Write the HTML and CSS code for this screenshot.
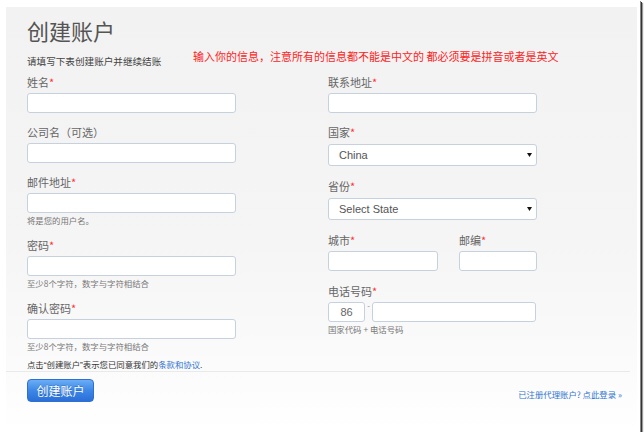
FILE: index.html
```html
<!DOCTYPE html>
<html lang="zh-CN">
<head>
<meta charset="utf-8">
<title>创建账户</title>
<link rel="stylesheet" href="styles.css">
</head>
<body>
<div class="frame">
  <div class="panel">
    <h1 class="title">创建账户</h1>
    <div class="intro">
      <p class="subtitle">请填写下表创建账户并继续结账</p>
      <p class="note">输入你的信息，注意所有的信息都不能是中文的 都必须要是拼音或者是英文</p>
    </div>
    <div class="cols">
      <div class="col">
        <div class="field">
          <label class="label">姓名<span class="req">*</span></label>
          <div class="input"></div>
        </div>
        <div class="field">
          <label class="label">公司名（可选）</label>
          <div class="input"></div>
        </div>
        <div class="field">
          <label class="label">邮件地址<span class="req">*</span></label>
          <div class="input"></div>
          <div class="help">将是您的用户名。</div>
        </div>
        <div class="field">
          <label class="label">密码<span class="req">*</span></label>
          <div class="input"></div>
          <div class="help">至少8个字符，数字与字符相结合</div>
        </div>
        <div class="field">
          <label class="label">确认密码<span class="req">*</span></label>
          <div class="input"></div>
          <div class="help">至少8个字符，数字与字符相结合</div>
        </div>
      </div>
      <div class="col col-right">
        <div class="field">
          <label class="label">联系地址<span class="req">*</span></label>
          <div class="input"></div>
        </div>
        <div class="field select-field">
          <label class="label">国家<span class="req">*</span></label>
          <div class="input select"><span>China</span><svg class="caret" width="5" height="4" viewBox="0 0 5 4"><polygon points="0,0 5,0 2.5,4" fill="#111"/></svg></div>
        </div>
        <div class="field select-field">
          <label class="label">省份<span class="req">*</span></label>
          <div class="input select"><span>Select State</span><svg class="caret" width="5" height="4" viewBox="0 0 5 4"><polygon points="0,0 5,0 2.5,4" fill="#111"/></svg></div>
        </div>
        <div class="field row">
          <div class="city">
            <label class="label">城市<span class="req">*</span></label>
            <div class="input"></div>
          </div>
          <div class="zip">
            <label class="label">邮编<span class="req">*</span></label>
            <div class="input"></div>
          </div>
        </div>
        <div class="field">
          <label class="label">电话号码<span class="req">*</span></label>
          <div class="phone">
            <div class="input cc">86</div>
            <span class="dash">-</span>
            <div class="input tel"></div>
          </div>
          <div class="help">国家代码 + 电话号码</div>
        </div>
      </div>
    </div>
    <p class="terms">点击“创建账户”表示您已同意我们的<a class="link" href="#">条款和协议</a>.</p>
    <div class="footer">
      <button class="btn" type="button">创建账户</button>
      <a class="login" href="#">已注册代理账户? 点此登录 »</a>
    </div>
  </div>
</div>
</body>
</html>
```
FILE: styles.css
```css
* { box-sizing: border-box; }
html, body { margin: 0; padding: 0; background: #fff; }
body { font-family: "Noto Sans CJK SC", "Liberation Sans", sans-serif; }

.frame {
  width: 640px;
  height: 432px;
  background: #fff;
  padding: 7px 3px 0 6px;
  box-shadow: 1px 1px 0 #888, 2px 2px 0 #333, 3px 3px 1px #999;
}
.panel {
  height: 425px;
  background: linear-gradient(#f2f2f2 0, #f5f5f5 55%, #fbfbfb 85%, #fff 100%);
  padding: 10px 0 0 21px;
}
.title {
  margin: 0;
  font-size: 22px;
  line-height: 26px;
  font-weight: normal;
  color: #555;
}
.intro {
  display: flex;
  align-items: flex-start;
  margin-top: 7px;
  height: 17px;
}
.subtitle {
  width: 166px;
  flex: none;
  margin: 5px 0 0;
  font-size: 9.6px;
  line-height: 12px;
  color: #444;
}
.note {
  margin: 0;
  font-size: 11px;
  line-height: 12px;
  color: #f22;
  white-space: nowrap;
}
.cols {
  display: grid;
  grid-template-columns: 209px 209px;
  column-gap: 92px;
  margin-top: 8px;
  align-items: start;
}
.field { margin-bottom: 12px; }
.field:last-child { margin-bottom: 0; }
.col-right .field { margin-bottom: 13px; }
.col-right .field:first-child { margin-bottom: 12px; }
.col-right .field:last-child { margin-bottom: 0; }
.label {
  display: block;
  font-size: 11px;
  line-height: 14px;
  color: #666;
  margin-bottom: 4px;
}
.req { color: #f33; }
.input {
  height: 20px;
  background: #fff;
  border: 1px solid #c6d1de;
  border-radius: 3px;
}
.help {
  margin-top: 2px;
  font-size: 8.4px;
  line-height: 11px;
  color: #777;
}
.select-field .label { margin-bottom: 5px; }
.select {
  height: 22px;
  display: flex;
  align-items: center;
  justify-content: space-between;
  padding: 0 4px 0 10px;
  font-family: "Liberation Sans", Arial, sans-serif;
  font-size: 11px;
  color: #555;
}
.row { display: flex; gap: 21px; }
.city { width: 110px; }
.zip { width: 78px; }
.phone { display: flex; align-items: flex-start; }
.cc {
  width: 37px;
  text-align: center;
  font-family: "Liberation Sans", Arial, sans-serif;
  font-size: 11px;
  line-height: 18px;
  color: #666;
}
.dash {
  width: 7px;
  text-align: center;
  font-family: "Liberation Sans", Arial, sans-serif;
  font-size: 8px;
  line-height: 8px;
  color: #888;
}
.tel { width: 164px; }
.terms {
  margin: 7px 0 0;
  font-family: "Liberation Sans", "Noto Sans CJK SC", sans-serif;
  font-size: 8.4px;
  line-height: 12px;
  color: #333;
}
.link { color: #2f74d0; text-decoration: none; }
.footer {
  display: flex;
  justify-content: space-between;
  align-items: flex-end;
  margin: 0 7px 0 -21px;
  padding: 7px 8px 0 21px;
  border-top: 1px solid #e9e9e9;
}
.btn {
  width: 67px;
  height: 23px;
  padding: 0;
  border: 1px solid #2e6fcf;
  border-radius: 4px;
  background: linear-gradient(#6aaef6, #3d87e6 50%, #2a6fd8);
  color: #fff;
  font-family: "Noto Sans CJK SC", sans-serif;
  font-size: 12px;
  line-height: 21px;
  text-shadow: 0 -1px 0 rgba(0, 0, 0, 0.2);
}
.login {
  margin-bottom: 2px;
  font-size: 8.4px;
  line-height: 12px;
  color: #2f74d0;
  text-decoration: none;
}
```
